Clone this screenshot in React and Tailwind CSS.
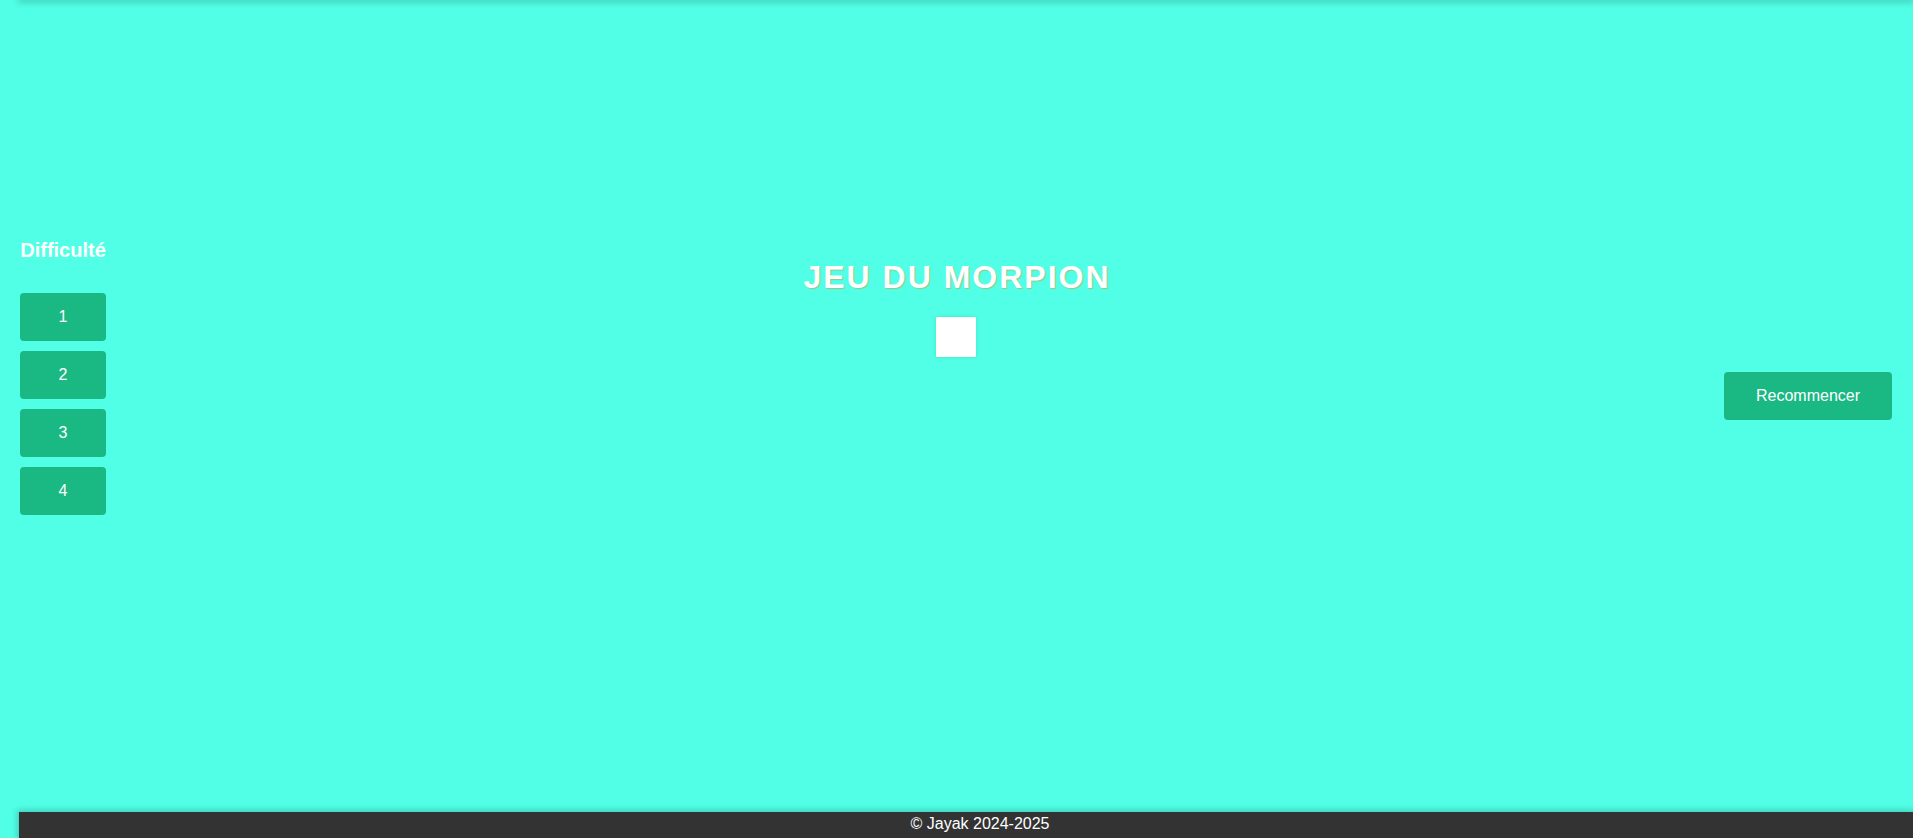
export default function App() {
  const levels = ["1", "2", "3", "4"];
  return (
    <div className="min-h-[838px] h-[838px] w-full overflow-hidden bg-[#50ffe6] flex flex-col text-white font-['Liberation_Sans',Arial,sans-serif]">
      <div className="h-0 ml-[20px] shadow-[0_0_6px_2px_rgba(0,0,0,0.25)]" />
      <div className="flex-1 flex">
        <aside className="w-[126px] px-5 pt-[238px] flex flex-col">
          <h2 className="text-[20px] leading-[24px] font-bold text-center mb-[31px] whitespace-nowrap">Difficulté</h2>
          <div className="flex flex-col gap-[10px]">
            {levels.map((l) => (
              <button
                key={l}
                className="h-[48px] w-[86px] rounded-[4px] bg-[#1ab883] text-white text-[16px] leading-none"
              >
                {l}
              </button>
            ))}
          </div>
        </aside>
        <main className="flex-1 flex flex-col items-center pt-[257px] pl-[62px]">
          <h1 className="text-[32px] leading-[40px] font-bold tracking-[2px] pl-[2px] [text-shadow:1px_1px_1px_rgba(190,170,100,0.7)]">
            JEU DU MORPION
          </h1>
          <div className="mt-[20px] w-[40px] h-[40px] bg-white shadow-[0_0_4px_rgba(0,0,0,0.12)]" />
        </main>
        <aside className="pr-[21px] pt-[372px]">
          <button className="h-[48px] w-[168px] rounded-[4px] bg-[#1ab883] text-white text-[16px] leading-none">
            Recommencer
          </button>
        </aside>
      </div>
      <footer className="ml-[19px] h-[26px] bg-[#333333] text-white text-[16px] leading-[24px] text-center pl-[28px] shadow-[0_0_6px_2px_rgba(0,0,0,0.2)]">
        © Jayak 2024-2025
      </footer>
    </div>
  );
}
